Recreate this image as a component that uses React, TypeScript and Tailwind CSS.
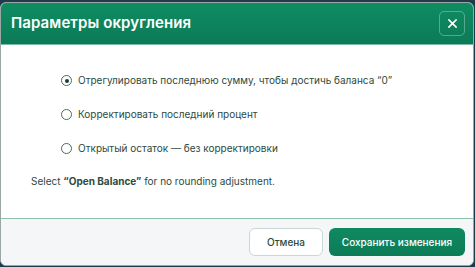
import React, { useState } from "react";

const options = [
  "Отрегулировать последнюю сумму, чтобы достичь баланса “0”",
  "Корректировать последний процент",
  "Открытый остаток — без корректировки",
];

export default function App() {
  const [selected, setSelected] = useState(0);

  return (
    <div className="h-[267px] w-[475px] overflow-hidden bg-[#1d3b4a] pt-[2px] font-['Inter',sans-serif]">
      <div className="flex h-[264px] w-[474px] flex-col overflow-hidden rounded-md border border-[#9aa7a3] bg-white">
        {/* Header */}
        <div className="flex h-[41px] shrink-0 items-center justify-between bg-gradient-to-b from-[#0f8c62] to-[#0b7b57] pl-[10px] pr-[8px]">
          <h1 className="text-[15px] font-semibold tracking-[0.1px] text-white">Параметры округления</h1>
          <button className="flex h-[25px] w-[26px] items-center justify-center rounded-[5px] border border-white/30 text-white">
            <svg width="11" height="11" viewBox="0 0 12 12" fill="none" stroke="currentColor" strokeWidth="1.7" strokeLinecap="round">
              <path d="M2 2l8 8M10 2l-8 8" />
            </svg>
          </button>
        </div>

        {/* Body */}
        <div className="flex flex-1 flex-col border-t border-[#7fb9a3] pl-[30px] pt-[26px]">
          <div className="flex flex-col gap-[15px] pl-[30px]">
            {options.map((label, i) => (
              <label key={i} className="flex h-[19px] cursor-pointer items-center gap-[6px] text-[10px] text-[#2d4a40]">
                <span
                  onClick={() => setSelected(i)}
                  className="flex h-[11px] w-[11px] items-center justify-center rounded-full border border-[#3d7060]"
                >
                  {selected === i && <span className="h-[4px] w-[4px] rounded-full bg-[#1f3a31]" />}
                </span>
                <span>{label}</span>
              </label>
            ))}
          </div>
          <p className="mt-[16px] text-[10px] text-[#2d4a40]">
            Select <span className="font-bold">“Open Balance”</span> for no rounding adjustment.
          </p>
        </div>

        {/* Footer */}
        <div className="flex h-[47px] shrink-0 items-center justify-end gap-[6px] border-t border-[#8cbfac] bg-[#f4f6f8] pr-[8px]">
          <button className="h-[28px] w-[74px] rounded-[6px] border border-[#c9d8d3] bg-white text-[10px] font-medium text-[#2d4a40]">
            Отмена
          </button>
          <button className="h-[28px] w-[136px] rounded-[6px] bg-gradient-to-b from-[#0f8a60] to-[#0c7c57] text-[10px] font-medium text-white">
            Сохранить изменения
          </button>
        </div>
      </div>
    </div>
  );
}
